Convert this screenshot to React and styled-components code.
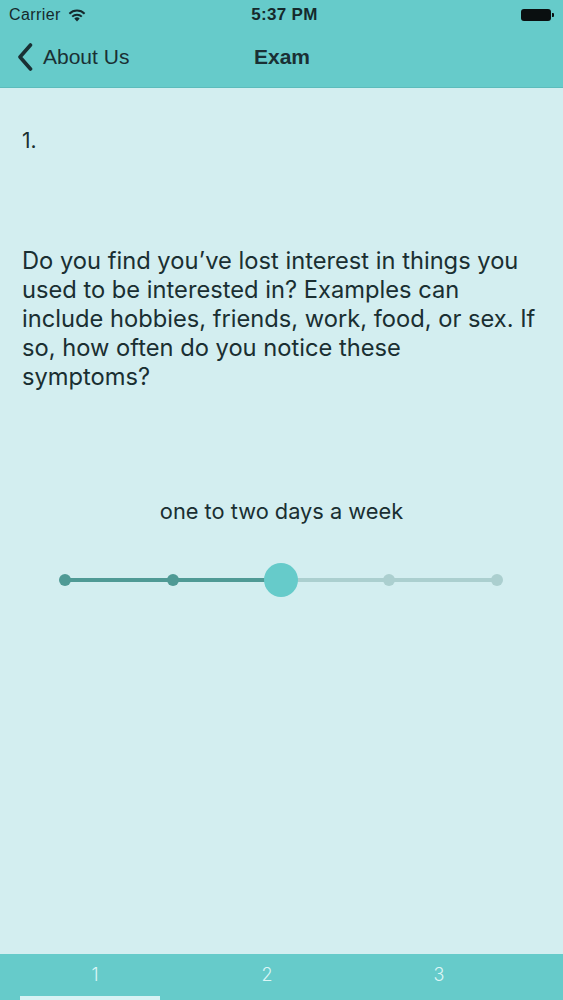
import React from "react";
import styled, { createGlobalStyle } from "styled-components";

const Global = createGlobalStyle`
  html, body { margin: 0; padding: 0; }
  body { background: #d3eef0; }
  #root { height: 1000px; }
`;

const Screen = styled.div`
  height: 1000px;
  display: flex;
  flex-direction: column;
  background: #d3eef0;
  overflow: hidden;
`;

const Header = styled.div`
  background: #66cbca;
  display: flex;
  flex-direction: column;
`;

const StatusBar = styled.div`
  height: 30px;
  display: grid;
  grid-template-columns: 1fr auto 1fr;
  align-items: center;
  padding: 0 9px 0 9px;
  color: #15292c;
  font-family: "Liberation Sans", Arial, sans-serif;
`;

const Carrier = styled.div`
  display: flex;
  align-items: center;
  gap: 7px;
  font-size: 16px;
  letter-spacing: 0.4px;
`;

const Time = styled.div`
  font-size: 17px;
  font-weight: 700;
  letter-spacing: 0.3px;
  margin-left: 6px;
`;

const BatteryWrap = styled.div`
  justify-self: end;
  display: flex;
  align-items: center;
  gap: 1px;
`;

const BatteryBody = styled.div`
  width: 30px;
  height: 12px;
  border-radius: 3px;
  background: #0a0f10;
`;

const BatteryTip = styled.div`
  width: 2px;
  height: 4px;
  border-radius: 0 1px 1px 0;
  background: #0a0f10;
`;

const NavBar = styled.div`
  height: 58px;
  box-sizing: border-box;
  padding: 0 16px 4px 17px;
  display: grid;
  grid-template-columns: 1fr auto 1fr;
  align-items: center;
  font-family: "Liberation Sans", Arial, sans-serif;
  color: #1a3034;
  border-bottom: 1px solid #5cbcbc;
`;

const Back = styled.div`
  display: flex;
  align-items: center;
  gap: 10px;
  font-size: 21px;
`;

const Title = styled.div`
  font-size: 21px;
  font-weight: 700;
`;

const Content = styled.div`
  flex: 1;
  display: flex;
  flex-direction: column;
  padding: 0 20px 0 22px;
  font-family: Inter, "Noto Sans", sans-serif;
  color: #1a2f32;
`;

const Number = styled.div`
  margin-top: 38px;
  font-size: 21px;
  line-height: 29px;
`;

const Question = styled.div`
  margin-top: 91px;
  font-size: 23.7px;
  line-height: 29px;
`;

const Answer = styled.div`
  margin-top: 106px;
  margin-right: 2px;
  text-align: center;
  font-size: 21.8px;
  line-height: 29px;
`;

const SliderArea = styled.div`
  margin: 36px -20px 0 -22px;
  height: 36px;
`;

const TabBar = styled.div`
  height: 46px;
  background: #66cbca;
  display: flex;
  padding-left: 9px;
  font-family: Inter, "Noto Sans", sans-serif;
`;

const Tab = styled.div`
  width: 172px;
  flex-shrink: 0;
  display: flex;
  flex-direction: column;
  align-items: center;
  color: #dcf6f6;
  font-size: 18px;
  font-weight: 300;
`;

const TabLabel = styled.div`
  flex: 1;
  display: flex;
  align-items: center;
  padding-bottom: 2px;
`;

const Indicator = styled.div`
  align-self: flex-start;
  margin-left: 11px;
  width: 140px;
  height: 4px;
  background: ${(p) => (p.$on ? "#d6f3f4" : "transparent")};
`;

const Wifi = () => (
  <svg width="18" height="13" viewBox="0 0 18 13">
    <path d="M9 12.5 L6.3 9.6 A3.8 3.8 0 0 1 11.7 9.6 Z" fill="#15292c" />
    <path d="M4.2 7.6 A6.9 6.9 0 0 1 13.8 7.6" stroke="#15292c" strokeWidth="2" fill="none" />
    <path d="M1.4 4.7 A10.9 10.9 0 0 1 16.6 4.7" stroke="#15292c" strokeWidth="2" fill="none" />
  </svg>
);

const Chevron = () => (
  <svg width="16" height="28" viewBox="0 0 16 28">
    <path d="M13.5 2 L3 14 L13.5 26" stroke="#1a3034" strokeWidth="3.6" fill="none" strokeLinecap="round" strokeLinejoin="round" />
  </svg>
);

const stops = [65, 173, 281, 389, 497];
const value = 2;

const Slider = () => (
  <svg width="563" height="36" viewBox="0 0 563 36">
    <line x1={stops[value]} y1="18" x2={stops[4]} y2="18" stroke="#abcfcf" strokeWidth="4" />
    <line x1={stops[0]} y1="18" x2={stops[value]} y2="18" stroke="#4f9a95" strokeWidth="4" />
    {stops.map((x, i) =>
      i === value ? null : (
        <circle key={x} cx={x} cy="18" r="6" fill={i < value ? "#4f9a95" : "#abcfcf"} />
      )
    )}
    <circle cx={stops[value]} cy="18" r="17" fill="#66cbca" />
  </svg>
);

const questionLines = [
  "Do you find you’ve lost interest in things you",
  "used to be interested in? Examples can",
  "include hobbies, friends, work, food, or sex. If",
  "so, how often do you notice these",
  "symptoms?",
];

export default function App() {
  return (
    <Screen>
      <Global />
      <Header>
        <StatusBar>
          <Carrier>
            Carrier <Wifi />
          </Carrier>
          <Time>5:37 PM</Time>
          <BatteryWrap>
            <BatteryBody />
            <BatteryTip />
          </BatteryWrap>
        </StatusBar>
        <NavBar>
          <Back>
            <Chevron />
            About Us
          </Back>
          <Title>Exam</Title>
          <div />
        </NavBar>
      </Header>
      <Content>
        <Number>1.</Number>
        <Question>
          {questionLines.map((l, i) => (
            <React.Fragment key={i}>
              {l}
              {i < questionLines.length - 1 && <br />}
            </React.Fragment>
          ))}
        </Question>
        <Answer>one to two days a week</Answer>
        <SliderArea>
          <Slider />
        </SliderArea>
      </Content>
      <TabBar>
        {["1", "2", "3"].map((t, i) => (
          <Tab key={t}>
            <TabLabel>{t}</TabLabel>
            <Indicator $on={i === 0} />
          </Tab>
        ))}
      </TabBar>
    </Screen>
  );
}
